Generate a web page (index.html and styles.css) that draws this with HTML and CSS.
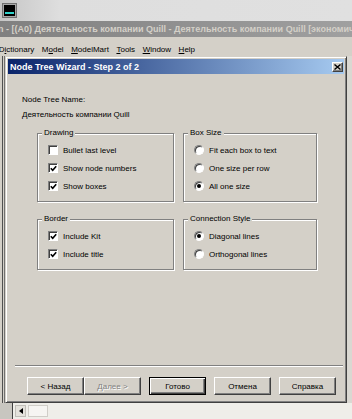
FILE: index.html
```html
<!DOCTYPE html>
<html>
<head>
  <meta charset="utf-8">
  <meta name="viewport" content="width=device-width, initial-scale=1.0">
  <link rel="stylesheet" href="styles.css">
</head>
<body>
  <div class="screen">
    <div class="toolbar">
      <svg class="app-icon" width="15" height="15" viewBox="0 0 15 15">
        <rect x="0.5" y="0.5" width="14" height="14" fill="#a8a8a8" stroke="#707070"/>
        <rect x="2" y="2" width="11" height="11" fill="#000"/>
        <rect x="3" y="9" width="9" height="2" fill="#30d4cc"/>
      </svg>
    </div>

    <div class="app-title">n - [(A0) Деятельность компании Quill - Деятельность компании Quill [экономическая деятельность]]</div>

    <div class="menubar">
      <span class="menu-item">D<u>i</u>ctionary</span>
      <span class="menu-item">M<u>o</u>del</span>
      <span class="menu-item"><u>M</u>odelMart</span>
      <span class="menu-item"><u>T</u>ools</span>
      <span class="menu-item"><u>W</u>indow</span>
      <span class="menu-item"><u>H</u>elp</span>
    </div>

    <div class="workspace">
      <div class="left-edge"></div>

      <div class="dialog">
        <div class="caption">
          <span class="caption-text">Node Tree Wizard - Step 2 of 2</span>
          <span class="close-btn">
            <svg width="7" height="6" viewBox="0 0 7 6">
              <path d="M0.5 0.5 L6.5 5.5 M6.5 0.5 L0.5 5.5" stroke="#000" stroke-width="1.4"/>
            </svg>
          </span>
        </div>

        <div class="dialog-body">
          <div class="name-label">Node Tree Name:</div>
          <div class="name-value">Деятельность компании Quill</div>

          <div class="groups">
            <fieldset class="group">
              <legend>Drawing</legend>
              <div class="option"><span class="check"></span>Bullet last level</div>
              <div class="option"><span class="check on"><svg width="7" height="7" viewBox="0 0 7 7"><path d="M0.8 3.2 L2.7 5.2 L6.2 1.2" fill="none" stroke="#000" stroke-width="1.6"/></svg></span>Show node numbers</div>
              <div class="option"><span class="check on"><svg width="7" height="7" viewBox="0 0 7 7"><path d="M0.8 3.2 L2.7 5.2 L6.2 1.2" fill="none" stroke="#000" stroke-width="1.6"/></svg></span>Show boxes</div>
            </fieldset>

            <fieldset class="group">
              <legend>Box Size</legend>
              <div class="option"><span class="radio"></span>Fit each box to text</div>
              <div class="option"><span class="radio"></span>One size per row</div>
              <div class="option"><span class="radio on"></span>All one size</div>
            </fieldset>

            <fieldset class="group">
              <legend>Border</legend>
              <div class="option"><span class="check on"><svg width="7" height="7" viewBox="0 0 7 7"><path d="M0.8 3.2 L2.7 5.2 L6.2 1.2" fill="none" stroke="#000" stroke-width="1.6"/></svg></span>Include Kit</div>
              <div class="option"><span class="check on"><svg width="7" height="7" viewBox="0 0 7 7"><path d="M0.8 3.2 L2.7 5.2 L6.2 1.2" fill="none" stroke="#000" stroke-width="1.6"/></svg></span>Include title</div>
            </fieldset>

            <fieldset class="group">
              <legend>Connection Style</legend>
              <div class="option"><span class="radio on"></span>Diagonal lines</div>
              <div class="option"><span class="radio"></span>Orthogonal lines</div>
            </fieldset>
          </div>

          <div class="footer">
            <div class="separator"></div>
            <div class="buttons">
              <div class="nav-pair">
                <span class="btn">&lt; Назад</span>
                <span class="btn disabled">Далее &gt;</span>
              </div>
              <span class="btn default">Готово</span>
              <span class="btn">Отмена</span>
              <span class="btn">Справка</span>
            </div>
          </div>
        </div>
      </div>

      <div class="right-edge"></div>
    </div>

    <div class="statusbar">
      <span class="sb-left"></span>
      <span class="sb-arrow">
        <svg width="4" height="6" viewBox="0 0 4 6"><path d="M4 0 L0 3 L4 6 Z" fill="#000"/></svg>
      </span>
      <span class="sb-thumb"></span>
    </div>
  </div>
</body>
</html>
```

FILE: styles.css
```css
* {
  box-sizing: border-box;
  margin: 0;
  padding: 0;
}

body {
  width: 352px;
  height: 419px;
  overflow: hidden;
  background: #d4d0c8;
  font-family: "Liberation Sans", Arial, sans-serif;
  font-size: 8px;
  color: #000;
}

.screen {
  display: flex;
  flex-direction: column;
  height: 419px;
}

/* application chrome behind the dialog */
.toolbar {
  height: 21px;
  display: flex;
  align-items: center;
  padding-left: 2px;
  background: linear-gradient(90deg, #c6c6c6 0, #dedede 60px, #e0e0e0 100%);
}

.app-title {
  height: 16px;
  line-height: 16px;
  text-indent: -2px;
  white-space: nowrap;
  overflow: hidden;
  font-size: 9px;
  font-weight: bold;
  color: #d4d0c8;
  background: linear-gradient(90deg, #808080, #a0a0a0);
}

.menubar {
  height: 19px;
  display: flex;
  align-items: flex-start;
  padding-top: 8px;
  line-height: 10px;
  margin-left: -5px;
  white-space: nowrap;
  background: #d4d0c8;
}

.menu-item {
  padding: 0 3.75px;
}

.workspace {
  flex: 1;
  display: flex;
  min-height: 0;
}

.left-edge {
  width: 5px;
  background: linear-gradient(90deg, #d4d0c8 0 2px, #505050 2px 3px, #d4d0c8 3px 4px, #707070 4px 5px);
}

.right-edge {
  flex: 1;
  background: #dad8d2;
}

/* dialog */
.dialog {
  width: 342px;
  display: flex;
  flex-direction: column;
  padding: 2px;
  border: 1px solid;
  border-color: #d4d0c8 #404040 #404040 #d4d0c8;
  box-shadow: inset 1px 1px #fff, inset -1px -1px #808080;
  background: #d4d0c8;
}

.caption {
  height: 15px;
  display: flex;
  align-items: center;
  justify-content: space-between;
  padding: 0 1px 0 2px;
  background: linear-gradient(90deg, #0a246a, #a6caf0);
}

.caption-text {
  font-size: 9px;
  font-weight: bold;
  color: #fff;
  white-space: nowrap;
}

.close-btn {
  width: 11px;
  height: 10px;
  display: flex;
  align-items: center;
  justify-content: center;
  background: #d4d0c8;
  border: 1px solid;
  border-color: #fff #404040 #404040 #fff;
  box-shadow: inset -1px -1px #808080;
}

.dialog-body {
  flex: 1;
  display: flex;
  flex-direction: column;
  padding: 21px 1px 5px 14px;
}

.name-label,
.name-value {
  line-height: 10px;
}

.name-label {
  margin-bottom: 5px;
}

.groups {
  display: grid;
  grid-template-columns: 137px 134px;
  column-gap: 9px;
  row-gap: 12px;
  margin: 8px 0 0 15px;
}

.group {
  min-width: 0;
  border: 1px solid #808080;
  padding: 3px 6px 6px 10px;
  box-shadow: inset 1px 1px #fff, 1px 1px #fff;
}

.group legend {
  margin-left: -6px;
  padding: 0 2px;
  line-height: 10px;
  background: #d4d0c8;
}

.option {
  height: 18px;
  display: flex;
  align-items: center;
  gap: 5px;
  white-space: nowrap;
}

.check {
  width: 10px;
  height: 10px;
  display: flex;
  align-items: center;
  justify-content: center;
  background: #fff;
  border: 1px solid;
  border-color: #808080 #fff #fff #808080;
  box-shadow: inset 1px 1px #404040;
}

.radio {
  width: 10px;
  height: 10px;
  display: flex;
  align-items: center;
  justify-content: center;
  border-radius: 50%;
  background: #fff;
  border: 1px solid;
  border-color: #808080 #fff #fff #808080;
  box-shadow: inset 1px 1px #404040;
}

.radio.on::after {
  content: "";
  width: 4px;
  height: 4px;
  border-radius: 50%;
  background: #000;
}

/* bottom buttons */
.footer {
  margin: auto 0 0 -7px;
}

.separator {
  height: 2px;
  border-top: 1px solid #808080;
  border-bottom: 1px solid #fff;
}

.buttons {
  display: flex;
  gap: 8px;
  margin-top: 10px;
  padding-left: 12px;
}

.nav-pair {
  display: flex;
}

.btn {
  width: 57px;
  height: 18px;
  display: flex;
  align-items: center;
  justify-content: center;
  background: #d4d0c8;
  border: 1px solid;
  border-color: #fff #404040 #404040 #fff;
  box-shadow: inset -1px -1px #808080;
  white-space: nowrap;
}

.btn.disabled {
  color: #808080;
  text-shadow: 1px 1px #fff;
}

.btn.default {
  border-color: #000;
  box-shadow: inset 1px 1px #fff, inset -1px -1px #404040, inset -2px -2px #808080;
}

/* strip under the dialog */
.statusbar {
  height: 16px;
  display: flex;
  align-items: center;
  background: #efeee9;
}

.sb-left {
  width: 13px;
  height: 16px;
  background: linear-gradient(90deg, #c8c6c0 0 12px, #404040 12px 13px);
}

.sb-arrow {
  width: 11px;
  height: 12px;
  margin-left: 2px;
  display: flex;
  align-items: center;
  justify-content: center;
  background: #e4e2dc;
  border: 1px solid #c0beb8;
}

.sb-thumb {
  width: 20px;
  height: 12px;
  margin-left: 2px;
  background: #f6f5f2;
  border: 1px solid #d0cec8;
}
```
